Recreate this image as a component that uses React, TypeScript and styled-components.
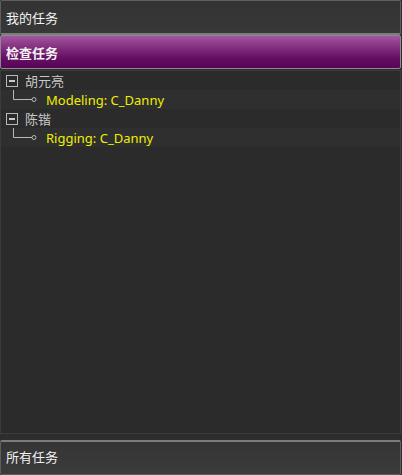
import * as React from 'react';
import styled, { createGlobalStyle } from 'styled-components';

const GlobalStyle = createGlobalStyle`
  html, body {
    margin: 0;
    padding: 0;
    background: #2d2d2d;
  }
  #root {
    width: 402px;
    height: 475px;
  }
`;

const Shell = styled.div`
  display: flex;
  flex-direction: column;
  width: 402px;
  height: 475px;
  box-sizing: border-box;
  padding-right: 1px;
  font-family: 'Noto Sans', 'Noto Sans CJK SC', sans-serif;
  font-size: 13px;
`;

const Header = styled.div<{ $active?: boolean }>`
  display: flex;
  align-items: center;
  height: 34px;
  box-sizing: border-box;
  padding-left: 5px;
  border: 1px solid ${(p) => (p.$active ? '#8c8c8c' : '#5e5e5e')};
  border-radius: 2px;
  color: #f2f2f2;
  font-weight: ${(p) => (p.$active ? 700 : 400)};
  background: ${(p) => (p.$active
    ? 'linear-gradient(to bottom, #a256a0 0%, #84307f 35%, #650e62 70%, #570558 100%)'
    : 'linear-gradient(to bottom, #333333 0%, #383838 100%)')};
  flex-shrink: 0;
`;

const TopHeader = styled(Header)`
  border-bottom-color: #7c7c7c;
  border-bottom-width: 2px;
  height: 35px;
`;

const Tree = styled.div`
  flex: 1;
  margin-top: 1px;
  border: 1px solid #3b3b3b;
  background: #2b2b2b;
`;

const Row = styled.div<{ $shade?: boolean }>`
  display: flex;
  align-items: center;
  height: 19px;
  background: ${(p) => (p.$shade ? '#2f2f2f' : 'transparent')};
`;

const Toggle = styled.span`
  position: relative;
  width: 12px;
  height: 12px;
  margin-left: 5px;
  margin-right: 7px;
  border: 1px solid #b8b8b8;
  box-sizing: border-box;
  &::after {
    content: '';
    position: absolute;
    left: 2px;
    right: 2px;
    top: 4px;
    height: 2px;
    background: #c8c8c8;
  }
`;

const GroupName = styled.span`
  color: #c8c8c8;
  font-family: 'Noto Sans CJK SC', sans-serif;
`;

const Leaf = styled.span`
  color: #f0f000;
  margin-left: 9px;
`;

const Connector = () => (
  <svg width="36" height="19" viewBox="0 0 36 19" style={{ flexShrink: 0 }}>
    <path d="M12.5 0 V9.5 H31" stroke="#b8b8b8" strokeWidth="1" fill="none" />
    <circle cx="33" cy="9.5" r="2" stroke="#b8b8b8" strokeWidth="1" fill="#2b2b2b" />
  </svg>
);

const Footer = styled(Header)`
  margin-top: 6px;
  padding-bottom: 3px;
  border-top-color: #7c7c7c;
  border-top-width: 2px;
  height: 35px;
  background: linear-gradient(to bottom, #353535 0%, #3b3b3b 100%);
`;

const groups = [
  { name: '胡元亮', task: 'Modeling: C_Danny' },
  { name: '陈锴', task: 'Rigging: C_Danny' },
];

export default function App() {
  return (
    <>
      <GlobalStyle />
      <Shell>
        <TopHeader>我的任务</TopHeader>
        <Header $active>检查任务</Header>
        <Tree>
          {groups.map((g) => (
            <React.Fragment key={g.name}>
              <Row>
                <Toggle />
                <GroupName>{g.name}</GroupName>
              </Row>
              <Row $shade>
                <Connector />
                <Leaf>{g.task}</Leaf>
              </Row>
            </React.Fragment>
          ))}
        </Tree>
        <Footer>所有任务</Footer>
      </Shell>
    </>
  );
}
